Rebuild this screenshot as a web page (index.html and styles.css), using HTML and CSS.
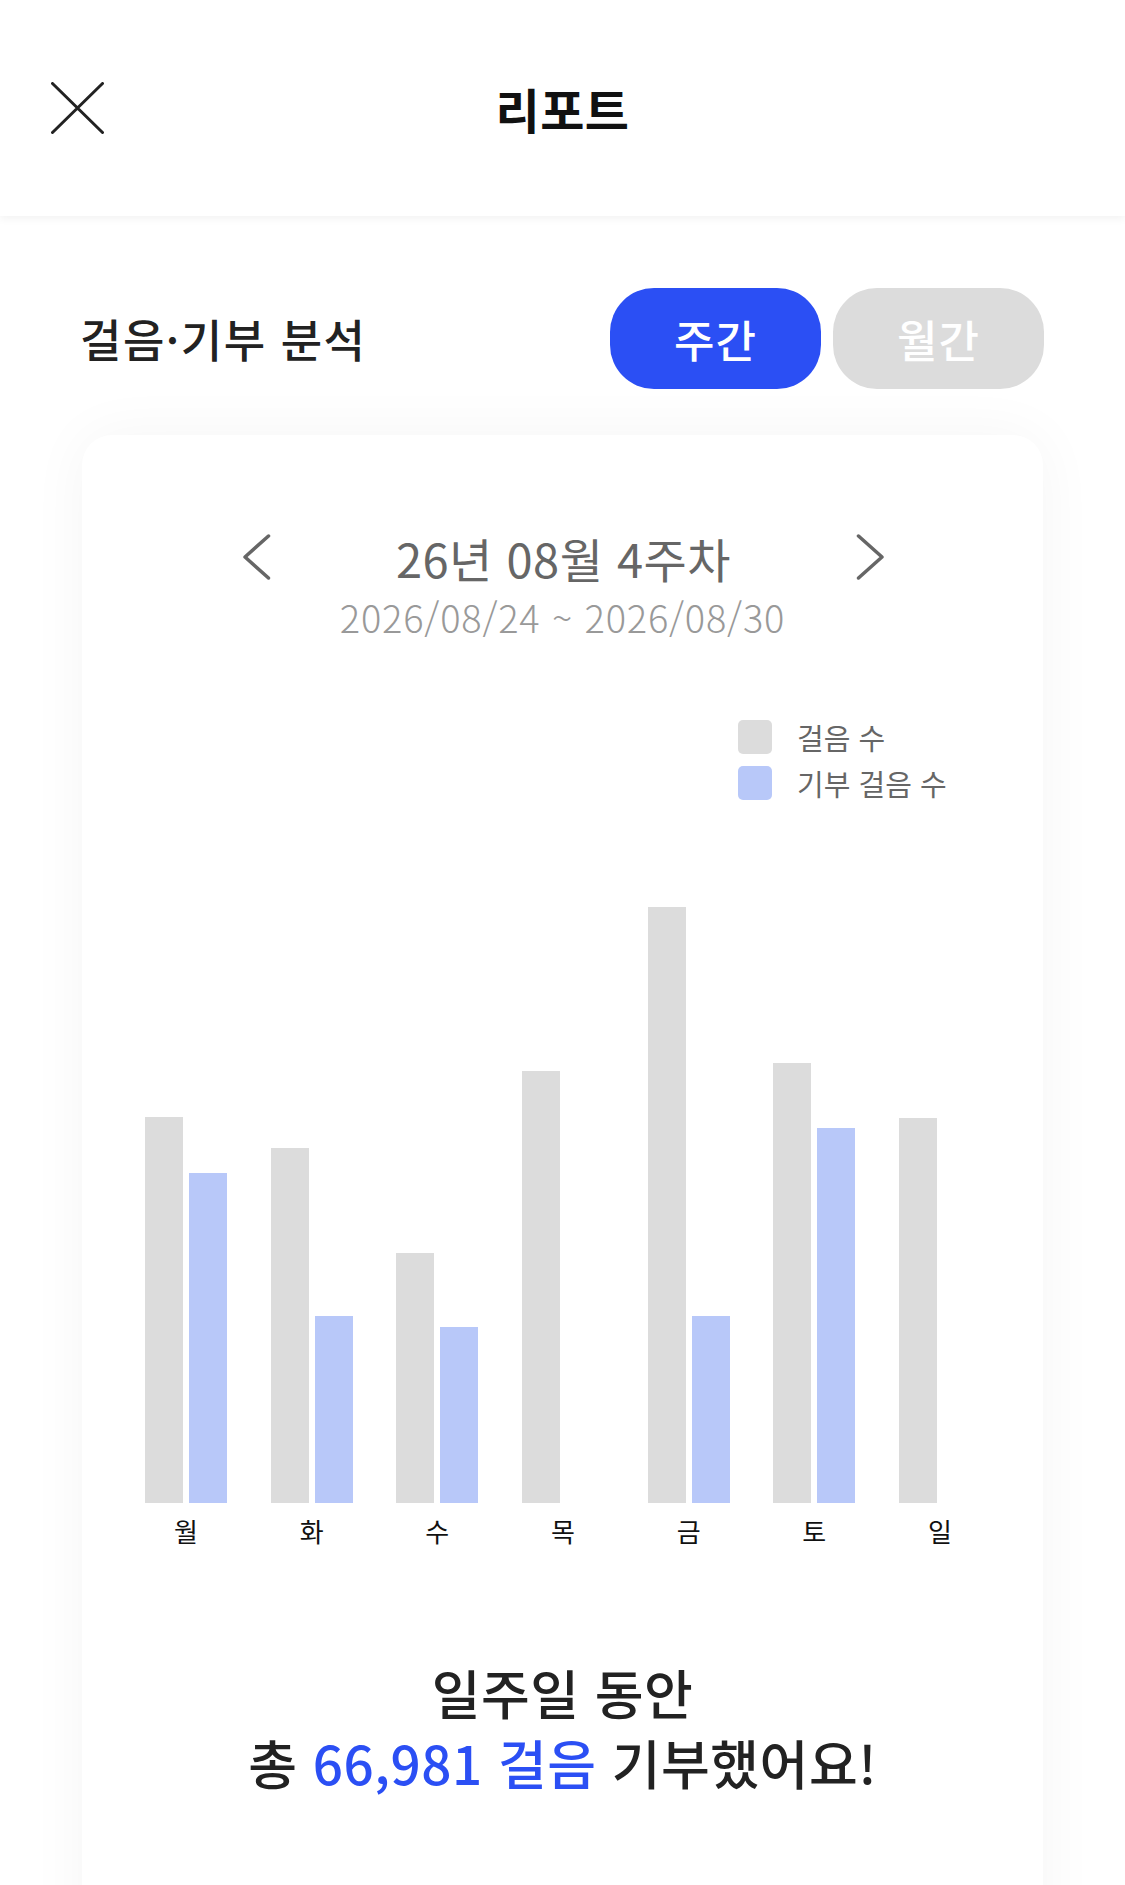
FILE: index.html
```html
<!DOCTYPE html>
<html lang="ko">
<head>
<meta charset="utf-8">
<title>리포트</title>
<link rel="stylesheet" href="styles.css">
</head>
<body>
<header class="topbar">
  <div class="topbar-left">
    <svg class="close-icon" width="53" height="52" viewBox="0 0 53 52" aria-hidden="true">
      <path d="M1.5 1.5 L51.5 50.5 M51.5 1.5 L1.5 50.5" stroke="#222" stroke-width="3" stroke-linecap="round" fill="none"/>
    </svg>
  </div>
  <h1 class="topbar-title">리포트</h1>
  <div class="topbar-right"></div>
</header>

<section class="section-head">
  <h2 class="section-title">걸음·기부 분석</h2>
  <div class="tabs">
    <button class="tab tab-active">주간</button>
    <button class="tab">월간</button>
  </div>
</section>

<main class="card">
  <div class="period-nav">
    <svg class="chev" width="28" height="46" viewBox="0 0 28 46" aria-hidden="true">
      <path d="M25.5 2 L2 23 L25.5 44" stroke="#666" stroke-width="3.5" stroke-linecap="round" stroke-linejoin="round" fill="none"/>
    </svg>
    <div class="period-title">26년 08월 4주차</div>
    <svg class="chev" width="28" height="46" viewBox="0 0 28 46" aria-hidden="true">
      <path d="M2.5 2 L26 23 L2.5 44" stroke="#666" stroke-width="3.5" stroke-linecap="round" stroke-linejoin="round" fill="none"/>
    </svg>
  </div>
  <div class="period-range">2026/08/24 ~ 2026/08/30</div>

  <div class="legend">
    <div class="legend-row"><span class="swatch swatch-steps"></span><span class="legend-text">걸음 수</span></div>
    <div class="legend-row"><span class="swatch swatch-donate"></span><span class="legend-text">기부 걸음 수</span></div>
  </div>

  <div class="chart">
    <div class="group"><span class="bar bar-steps" style="height:386px"></span><span class="bar bar-donate" style="height:330px"></span></div>
    <div class="group"><span class="bar bar-steps" style="height:355px"></span><span class="bar bar-donate" style="height:187px"></span></div>
    <div class="group"><span class="bar bar-steps" style="height:250px"></span><span class="bar bar-donate" style="height:176px"></span></div>
    <div class="group"><span class="bar bar-steps" style="height:432px"></span><span class="bar bar-donate" style="height:0px"></span></div>
    <div class="group"><span class="bar bar-steps" style="height:596px"></span><span class="bar bar-donate" style="height:187px"></span></div>
    <div class="group"><span class="bar bar-steps" style="height:440px"></span><span class="bar bar-donate" style="height:375px"></span></div>
    <div class="group"><span class="bar bar-steps" style="height:385px"></span><span class="bar bar-donate" style="height:0px"></span></div>
  </div>
  <div class="days">
    <span class="day">월</span>
    <span class="day">화</span>
    <span class="day">수</span>
    <span class="day">목</span>
    <span class="day">금</span>
    <span class="day">토</span>
    <span class="day">일</span>
  </div>

  <p class="summary">일주일 동안<br>총 <span class="accent">66,981 걸음</span> 기부했어요!</p>
</main>
</body>
</html>
```

FILE: styles.css
```css
* { box-sizing: border-box; }

html, body {
  margin: 0;
  padding: 0;
  background: #ffffff;
  font-family: "Noto Sans CJK KR", "Noto Sans", sans-serif;
  color: #222;
}

.topbar {
  height: 216px;
  display: grid;
  grid-template-columns: 1fr auto 1fr;
  align-items: center;
  background: #fff;
  box-shadow: 0 3px 8px rgba(0, 0, 0, 0.05);
  position: relative;
  z-index: 2;
}

.topbar-left {
  padding-left: 51px;
  display: flex;
  align-items: center;
}

.close-icon { display: block; }

.topbar-title {
  margin: 0;
  font-size: 48px;
  font-weight: 700;
  color: #111;
  line-height: 1;
  letter-spacing: 0.5px;
}

.section-head {
  display: flex;
  align-items: center;
  justify-content: space-between;
  padding: 72px 81px 0 80px;
}

.section-title {
  margin: 0;
  font-size: 45px;
  font-weight: 500;
  color: #222;
  line-height: 1;
  letter-spacing: 1.5px;
}

.tabs {
  display: flex;
  gap: 12px;
}

.tab {
  width: 211px;
  height: 101px;
  border: none;
  border-radius: 44px;
  background: #dcdcdc;
  color: #fff;
  font-family: inherit;
  font-size: 44px;
  font-weight: 500;
  padding: 0;
  line-height: 1;
  letter-spacing: 1px;
}

.tab-active {
  background: #2b4ff4;
}

.card {
  margin: 46px 82px 0 82px;
  background: #fff;
  border-radius: 30px;
  box-shadow: 0 0 60px rgba(0, 0, 0, 0.045);
  padding: 90px 0 300px 0;
  display: flex;
  flex-direction: column;
}

.period-nav {
  display: grid;
  grid-template-columns: auto 1fr auto;
  align-items: center;
  padding: 0 159px 0 161px;
  height: 64px;
}

.chev { display: block; }

.period-title {
  text-align: center;
  font-size: 47px;
  font-weight: 400;
  color: #666;
  line-height: 1;
  letter-spacing: 0.5px;
}

.period-range {
  text-align: center;
  font-size: 38px;
  font-weight: 300;
  color: #999;
  line-height: 44px;
  margin-top: 6px;
  letter-spacing: 0.8px;
}

.legend {
  margin: 81px 0 0 656px;
  display: flex;
  flex-direction: column;
  gap: 12px;
}

.legend-row {
  display: flex;
  align-items: center;
  gap: 25px;
  height: 34px;
}

.swatch {
  width: 34px;
  height: 34px;
  border-radius: 5px;
  flex: none;
}

.swatch-steps { background: #dcdcdc; }
.swatch-donate { background: #b8c8f9; }

.legend-text {
  font-size: 29px;
  color: #666;
  line-height: 1;
}

.chart {
  margin-top: 103px;
  height: 600px;
  display: flex;
  justify-content: space-between;
  align-items: flex-end;
  padding: 0 62px 0 63px;
}

.group {
  width: 82px;
  display: flex;
  align-items: flex-end;
  gap: 6px;
}

.bar {
  width: 38px;
  display: block;
}

.bar-steps { background: #dcdcdc; }
.bar-donate { background: #b8c8f9; }

.days {
  margin-top: 10px;
  display: flex;
  justify-content: space-between;
  padding: 0 62px 0 63px;
}

.day {
  width: 82px;
  text-align: center;
  font-size: 26px;
  line-height: 36px;
  color: #111;
}

.summary {
  margin: 108px 0 0 0;
  text-align: center;
  font-size: 53px;
  font-weight: 500;
  line-height: 70px;
  color: #222;
  letter-spacing: 0.5px;
}

.accent { color: #2b4ff4; }
```
